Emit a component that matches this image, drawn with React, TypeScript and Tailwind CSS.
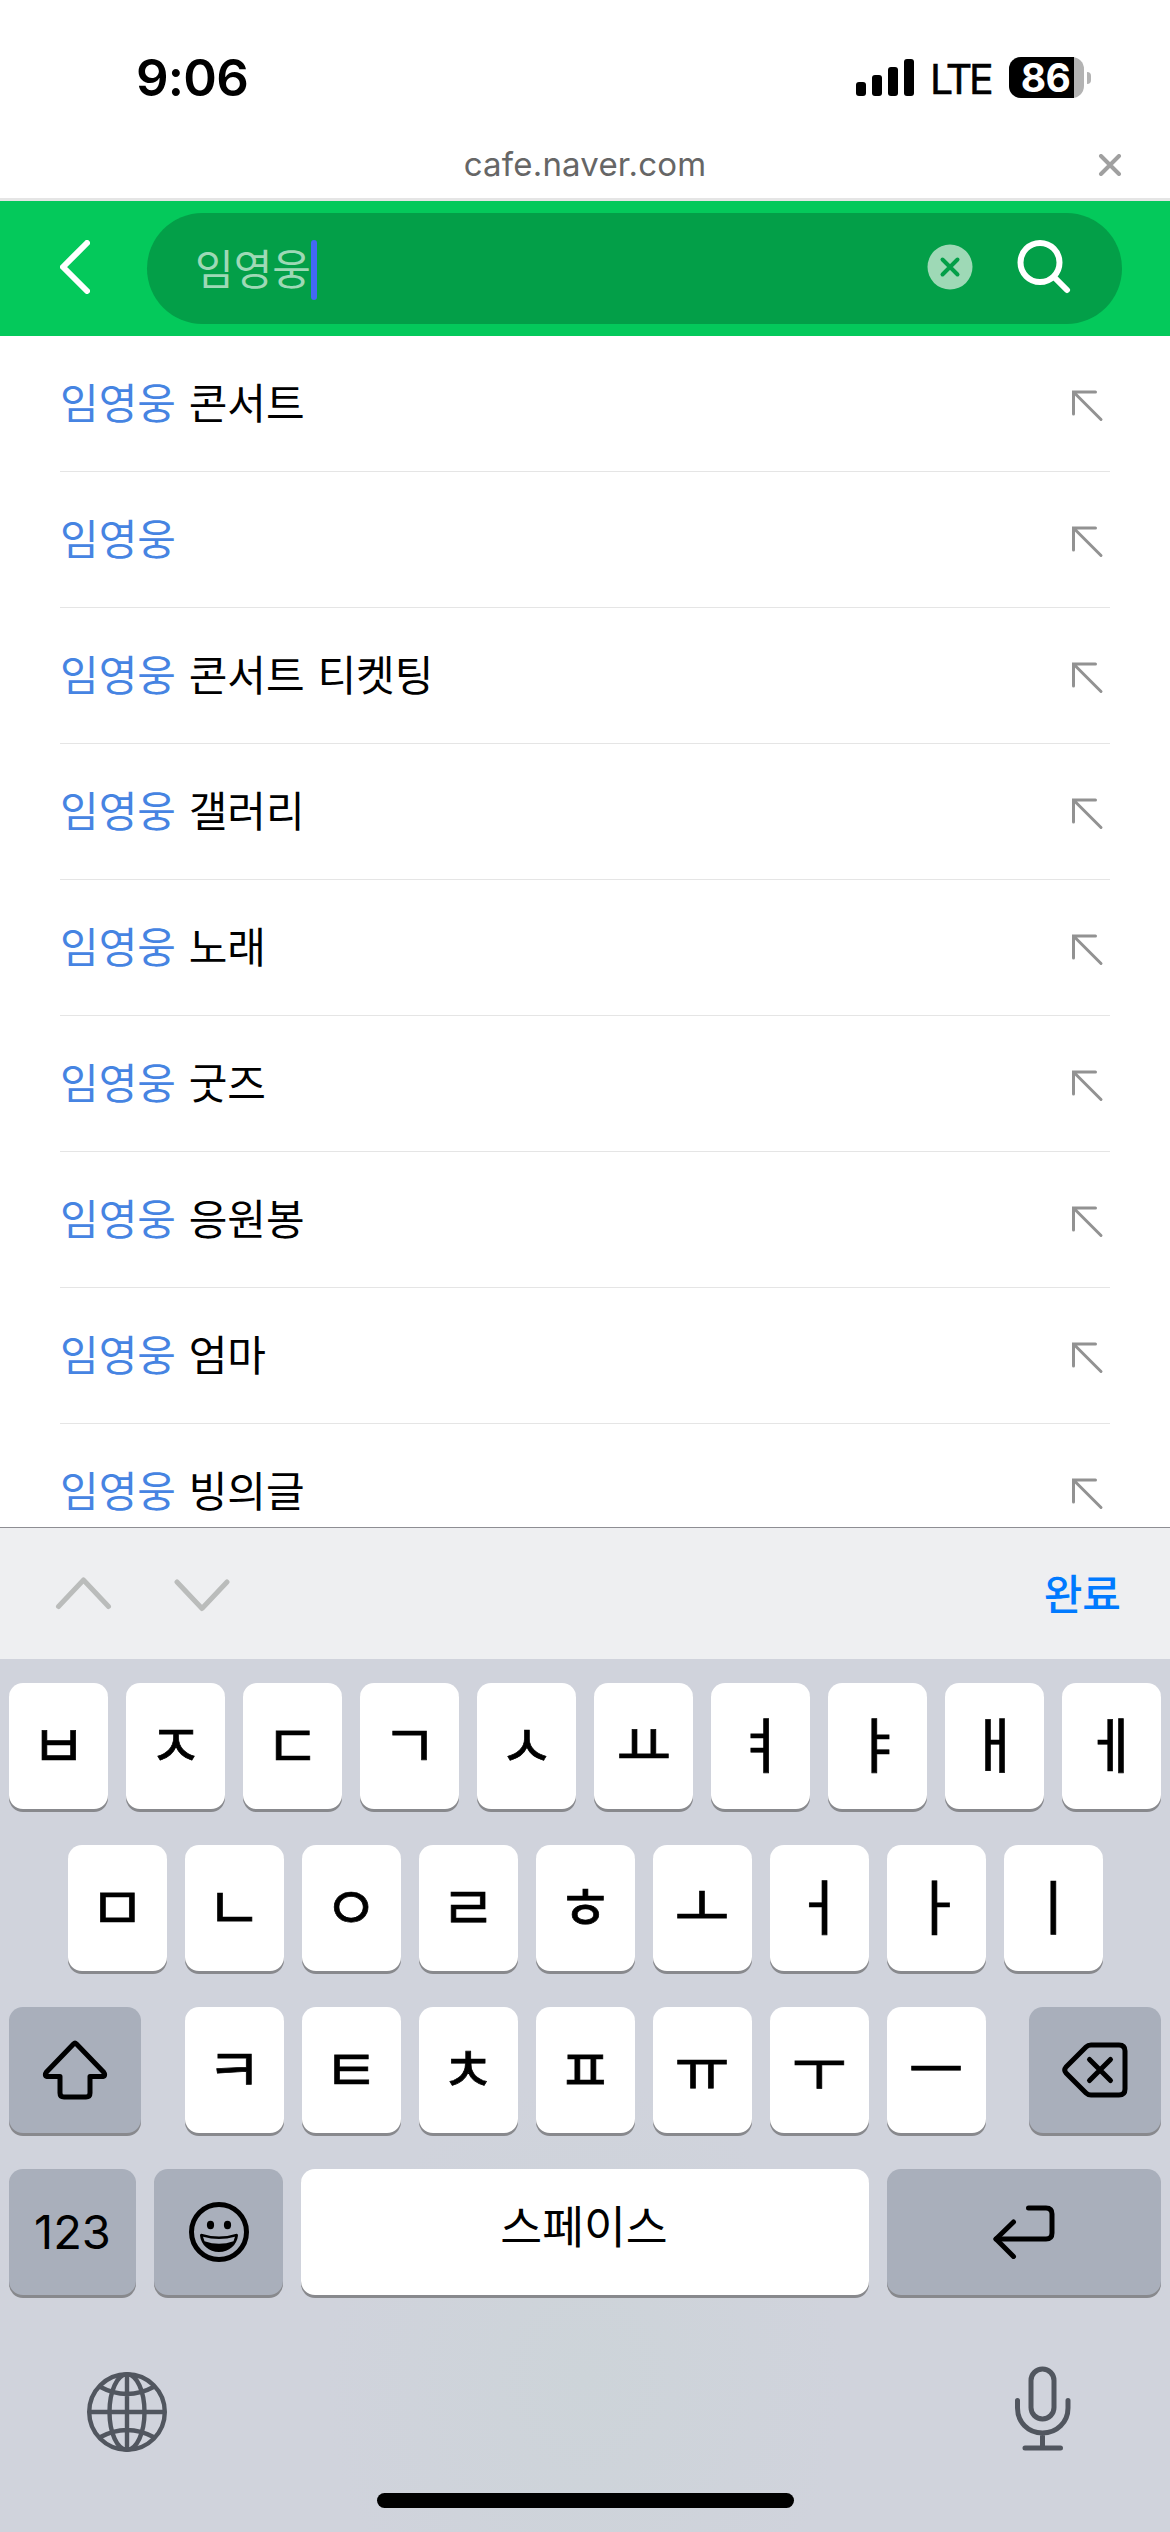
import React from 'react';

const suggestions = ['콘서트', '', '콘서트 티켓팅', '갤러리', '노래', '굿즈', '응원봉', '엄마', '빙의글'];

const keyRows = [
  ['ㅂ', 'ㅈ', 'ㄷ', 'ㄱ', 'ㅅ', 'ㅛ', 'ㅕ', 'ㅑ', 'ㅐ', 'ㅔ'],
  ['ㅁ', 'ㄴ', 'ㅇ', 'ㄹ', 'ㅎ', 'ㅗ', 'ㅓ', 'ㅏ', 'ㅣ'],
  ['ㅋ', 'ㅌ', 'ㅊ', 'ㅍ', 'ㅠ', 'ㅜ', 'ㅡ'],
];

const keyBase = 'flex h-[126px] items-center justify-center rounded-[14px] shadow-[0_3px_0_#88898d]';

const LetterKey = ({ label }: { label: string }) => (
  <button className={`${keyBase} w-[99px] bg-white text-[60px] leading-none [-webkit-text-stroke:0.7px_black]`}>
    {label}
  </button>
);

const StatusBar = () => (
  <div className="flex h-[138px] items-start justify-between pl-[136px] pr-[79px]">
    <span className="mt-[47px] text-[51px] leading-[62px] font-semibold tracking-[-0.8px]">9:06</span>
    <div className="mt-[57px] flex h-[41px] items-center">
      <svg width="58" height="37" viewBox="0 0 58 37">
        <rect x="0" y="23" width="10" height="14" rx="3" />
        <rect x="16" y="16" width="10" height="21" rx="3" />
        <rect x="32" y="8" width="10" height="29" rx="3" />
        <rect x="48" y="0" width="10" height="37" rx="3" />
      </svg>
      <span className="ml-[16px] w-[61px] pt-[2px] text-[41px] leading-[50px] tracking-[-3.4px] [-webkit-text-stroke:0.5px_black]">LTE</span>
      <div className="ml-[18px] flex h-[41px] w-[75px] items-center rounded-[12px] bg-[#b3b3b3]">
        <div className="flex h-full w-[65px] items-center justify-center rounded-l-[12px] bg-black pl-[8px] text-[39px] leading-[48px] font-bold tracking-[-0.5px] text-white">
          86
        </div>
      </div>
      <div className="ml-[3px] h-[12px] w-[4px] rounded-r-full bg-[#b3b3b3]" />
    </div>
  </div>
);

const AddressBar = () => (
  <div className="grid h-[63px] grid-cols-[1fr_auto_1fr] border-b-[3px] border-[#e5e5e5]">
    <span />
    <span className="text-[33px] leading-[53px] tracking-[0.2px] text-[#666]">cafe.naver.com</span>
    <svg className="mt-[16px] mr-[48px] justify-self-end" width="24" height="22" viewBox="0 0 24 22" fill="none" stroke="#a0a0a0" strokeWidth="4" strokeLinecap="round">
      <path d="M3 2l18 18M21 2L3 20" />
    </svg>
  </div>
);

const SearchHeader = () => (
  <div className="flex h-[135px] items-center bg-[#04c95b] pr-[48px] pl-[60px]">
    <svg className="mb-[3px]" width="30" height="54" viewBox="0 0 30 54" fill="none" stroke="#fff" strokeWidth="6" strokeLinecap="round" strokeLinejoin="round">
      <path d="M27 3L3 27l24 24" />
    </svg>
    <div className="ml-[57px] flex h-[111px] flex-1 items-center rounded-full bg-[#039f48] pl-[48px]">
      <span className="pt-[3px] text-[42px] leading-[60px] text-[#9ed9b6]">임영웅</span>
      <span className="mt-[3px] h-[60px] w-[6px] rounded-full bg-[#4368f5]" />
      <svg className="mr-[44px] mb-[3px] ml-auto" width="46" height="46" viewBox="0 0 46 46">
        <circle cx="23" cy="23" r="22.5" fill="#9ed9b6" />
        <path d="M15.500 15.500l15 15M30.500 15.500l-15 15" stroke="#039f48" strokeWidth="4" strokeLinecap="round" />
      </svg>
      <svg className="mr-[51px] mb-[3px]" width="54" height="54" viewBox="0 0 54 54" fill="none" stroke="#fff" strokeWidth="6" strokeLinecap="round">
        <circle cx="23" cy="22.5" r="19.5" />
        <path d="M37.500 37.500L50 50" />
      </svg>
    </div>
  </div>
);

const SuggestionList = () => (
  <ul className="h-[1191px] overflow-hidden px-[60px]">
    {suggestions.map((text, i) => (
      <li key={i} className="flex h-[136px] items-center justify-between border-b border-[#e5e5e5] pr-[6px] text-[42px] leading-[60px]">
        <span className="whitespace-pre [word-spacing:1px]">
          <span className="text-[#4684e2]">임영웅</span>
          {text && ` ${text}`}
        </span>
        <svg className="mt-[4px]" width="33" height="33" viewBox="0 0 33 33" fill="none" stroke="#929292" strokeWidth="3" strokeLinecap="round">
          <path d="M24.500 3H2.500v22M2.500 3L30 30.500" />
        </svg>
      </li>
    ))}
  </ul>
);

const InputToolbar = () => (
  <div className="flex h-[132px] items-center border-t border-[#8e8e93] bg-[#eeeff1] pr-[49px] pl-[55px]">
    <svg width="176" height="36" viewBox="0 0 176 36" fill="none" stroke="#babcbb" strokeWidth="5" strokeLinecap="round" strokeLinejoin="round">
      <path d="M3.500 30.500l25-26.500 25 26.500" />
      <path d="M122 6l25 26.500L172 6" />
    </svg>
    <span className="ml-auto pt-[2px] text-[42px] leading-[60px] font-medium text-[#007aff]">완료</span>
  </div>
);

const ShiftIcon = () => (
  <svg width="66" height="62" viewBox="0 0 66 62" fill="none" stroke="#000" strokeWidth="5" strokeLinejoin="round">
    <path d="M31.500 5q1.500-1.500 3 0L61.500 33q3 4.500-2 4.500H48V54q0 4-4 4H22q-4 0-4-4V37.500H6.500q-5 0-2-4.500z" />
  </svg>
);

const BackspaceIcon = () => (
  <svg width="66" height="60" viewBox="0 -2 66 60" fill="none" stroke="#000" strokeWidth="5" strokeLinecap="round" strokeLinejoin="round">
    <path d="M29 3h28q6 0 6 6v38q0 6-6 6H29q-3 0-5-2L4 31q-2.500-3 0-6L24 5q2-2 5-2z" />
    <path d="M27.500 17.500l21 21M48.500 17.500l-21 21" />
  </svg>
);

const EmojiIcon = () => (
  <svg width="60" height="60" viewBox="0 0 60 60">
    <circle cx="30" cy="30" r="27.500" fill="none" stroke="#000" strokeWidth="5" />
    <ellipse cx="21.500" cy="23" rx="3.600" ry="4.200" />
    <ellipse cx="38.500" cy="23" rx="3.600" ry="4.200" />
    <path d="M11 33.500q0-2.500 2.500-1.500 16.500 5 33 0 2.500-1 2.500 1.500C48 43 40 50 30 50S12 43 11 33.500z" />
    <path d="M14 34.800q16 4.500 32 0l-1.500 4.500q-14.500 5-29 0z" fill="#a9afbb" />
  </svg>
);

const ReturnIcon = () => (
  <svg width="62" height="54" viewBox="0 0 62 54" fill="none" stroke="#000" strokeWidth="5" strokeLinecap="round" strokeLinejoin="round">
    <path d="M35.500 3H53q6 0 6 6v19q0 6-6 6H3" />
    <path d="M20.500 17L3 34l17.500 17.500" />
  </svg>
);

const Keyboard = () => (
  <div className="flex h-[873px] flex-col bg-[#d0d3dc] bg-[radial-gradient(ellipse_260px_300px_at_585px_720px,#cdd4d9,#d0d3dc)] px-[9px] pt-[24px]">
    <div className="flex flex-col gap-[36px]">
      <div className="flex justify-between">
        {keyRows[0].map((k) => <LetterKey key={k} label={k} />)}
      </div>
      <div className="flex justify-center gap-[18px]">
        {keyRows[1].map((k) => <LetterKey key={k} label={k} />)}
      </div>
      <div className="flex justify-between">
        <button className={`${keyBase} w-[132px] bg-[#a9afbb]`}><ShiftIcon /></button>
        <div className="flex gap-[18px]">
          {keyRows[2].map((k) => <LetterKey key={k} label={k} />)}
        </div>
        <button className={`${keyBase} w-[132px] bg-[#a9afbb]`}><BackspaceIcon /></button>
      </div>
      <div className="flex gap-[18px]">
        <button className={`${keyBase} w-[127px] bg-[#a9afbb] pb-[2px] text-[47px] leading-none`}>123</button>
        <button className={`${keyBase} w-[129px] bg-[#a9afbb]`}><EmojiIcon /></button>
        <button className={`${keyBase} flex-1 bg-white pr-[2px] pb-[9px] text-[45.500px] leading-none`}>스페이스</button>
        <button className={`${keyBase} w-[274px] bg-[#a9afbb]`}><ReturnIcon /></button>
      </div>
    </div>
    <div className="mt-[69px] flex items-start justify-between pr-[89px] pl-[77px]">
      <svg className="mt-[7px]" width="82" height="82" viewBox="0 0 82 82" fill="none" stroke="#51565f" strokeWidth="4.400">
        <circle cx="41" cy="41" r="37.800" />
        <ellipse cx="41" cy="41" rx="17.500" ry="37.800" />
        <path d="M41 3v76M3 41h76M13.500 15.500q27.500 15 55 0M13.500 66.500q27.500-15 55 0" />
      </svg>
      <svg className="mt-[1px]" width="58" height="88" viewBox="0 0 58 88" fill="none" stroke="#51565f" strokeWidth="5" strokeLinecap="round">
        <rect x="17" y="4" width="23" height="50" rx="11.500" />
        <path d="M3.500 35.500V43C3.500 57 14 68 28.500 68S54 57 54 43v-7.500M28.500 68v15M11 83h35.500" />
      </svg>
    </div>
    <div className="mt-auto mb-[24px] h-[15px] w-[417px] self-center rounded-full bg-black" />
  </div>
);

export default function App() {
  return (
    <div className="h-[2532px] w-[1170px] overflow-hidden bg-white font-['Inter','Noto_Sans_CJK_KR',sans-serif] text-black">
      <StatusBar />
      <AddressBar />
      <SearchHeader />
      <SuggestionList />
      <InputToolbar />
      <Keyboard />
    </div>
  );
}
